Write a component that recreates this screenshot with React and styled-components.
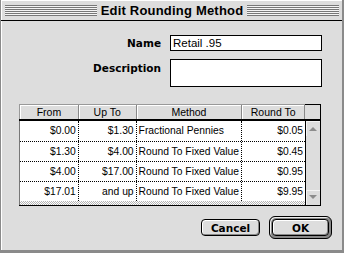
import styled, { createGlobalStyle } from "styled-components";

const GlobalStyle = createGlobalStyle`
    html, body {
        margin: 0;
        padding: 0;
        background: #dddddd;
    }
    * {
        box-sizing: border-box;
    }
`;

const Window = styled.div`
    width: 344px;
    height: 253px;
    background: #dddddd;
    border-left: 1px solid #8a8a8a;
    border-right: 2px solid #8a8a8a;
    border-bottom: 3px solid #8a8a8a;
    display: flex;
    flex-direction: column;
    font-family: "Liberation Sans", Arial, sans-serif;
    color: #000;
    overflow: hidden;
`;

const TitleBar = styled.div`
    height: 21px;
    flex-shrink: 0;
    display: flex;
    align-items: center;
    gap: 4px;
    padding: 0 3px 0 4px;
    border-bottom: 1px solid #000;
    box-shadow: inset 1px 1px 0 #fff;
`;

const Stripes = styled.div`
    flex: 1;
    height: 11px;
    background: repeating-linear-gradient(
        to bottom,
        #777 0 1px,
        #f4f4f4 1px 2px
    );
`;

const Title = styled.div`
    font-family: "Liberation Sans", Arial, sans-serif;
    font-weight: bold;
    font-size: 13px;
    letter-spacing: 0.2px;
    white-space: nowrap;
`;

const Body = styled.div`
    flex: 1;
    display: flex;
    flex-direction: column;
    box-shadow: inset 1px 0 0 #fff;
`;

const Form = styled.div`
    display: grid;
    grid-template-columns: 160px 152px;
    column-gap: 9px;
    row-gap: 8px;
    margin-top: 14px;
`;

const Label = styled.div`
    text-align: right;
    font-family: "DejaVu Sans", sans-serif;
    font-weight: bold;
    font-size: 10.5px;
    padding-top: ${(p) => (p.$top ? "3px" : "0")};
    align-self: ${(p) => (p.$top ? "start" : "center")};
`;

const Field = styled.div`
    height: ${(p) => p.$height}px;
    background: #fff;
    border: 1px solid #000;
    font-size: 11.5px;
    padding: 1px 2px;
    line-height: 13px;
`;

const List = styled.div`
    margin: 17px 0 0 18px;
    width: 302px;
    display: flex;
    flex-direction: column;
`;

const HeaderRow = styled.div`
    display: flex;
    height: 15px;
    border-top: 1px solid #999;
    border-left: 1px solid #999;
`;

const HeadCell = styled.div`
    width: ${(p) => p.$w}px;
    font-size: 10.5px;
    line-height: 14px;
    text-align: center;
    background: #dddddd;
    border-right: 1px solid #888;
    box-shadow: inset 1px 1px 0 #fff;
`;

const HeadCorner = styled.div`
    width: 16px;
    margin-top: -1px;
    border-top: 1px solid #000;
    border-right: 1px solid #000;
`;

const ListBody = styled.div`
    display: flex;
    border-top: 2px solid #000;
    border-bottom: 1px solid #000;
`;

const Rows = styled.div`
    width: 286px;
    display: flex;
    flex-direction: column;
    border-left: 1px solid #777;
    background-color: #fff;
    background-image: conic-gradient(
        #b5b5b5 25%,
        #fff 0 50%,
        #b5b5b5 0 75%,
        #fff 0
    );
    background-size: 2px 2px;
    padding-bottom: 4px;
`;

const Row = styled.div`
    display: flex;
    height: 20px;
    background: #fff;
    border-top: ${(p) => (p.$first ? "none" : "1px dotted #000")};
`;

const Cell = styled.div`
    width: ${(p) => p.$w}px;
    font-size: 10.3px;
    line-height: 19px;
    text-align: ${(p) => (p.$left ? "left" : "right")};
    padding: 0 2px;
    white-space: nowrap;
    overflow: hidden;
    border-right: ${(p) => (p.$last ? "none" : "1px dotted #000")};
`;

const Scrollbar = styled.div`
    width: 16px;
    display: flex;
    flex-direction: column;
    justify-content: space-between;
    background: #dddddd;
    border-left: 1px solid #000;
    border-right: 1px solid #000;
`;

const Arrow = styled.div`
    height: 15px;
    display: flex;
    align-items: center;
    justify-content: center;
    box-shadow: inset 1px 1px 0 #f4f4f4;
`;

const Buttons = styled.div`
    display: flex;
    justify-content: flex-end;
    align-items: center;
    gap: 9px;
    margin-top: 10px;
    padding-right: 10px;
`;

const Button = styled.div`
    width: ${(p) => p.$w}px;
    height: 17px;
    border: 1px solid #000;
    border-radius: 4px;
    background: #dddddd;
    box-shadow: inset 1px 1px 0 #fff, inset -1px -1px 0 #888;
    font-family: "DejaVu Sans", sans-serif;
    font-weight: bold;
    font-size: 10.5px;
    display: flex;
    align-items: center;
    justify-content: center;
`;

const DefaultRing = styled.div`
    padding: 2px;
    border: 1px solid #000;
    border-radius: 6px;
    background: #888;
    box-shadow: inset 1px 1px 0 #eee;
`;

const columns = [59, 58, 106, 63];

const rows = [
    ["$0.00", "$1.30", "Fractional Pennies", "$0.05"],
    ["$1.30", "$4.00", "Round To Fixed Value", "$0.45"],
    ["$4.00", "$17.00", "Round To Fixed Value", "$0.95"],
    ["$17.01", "and up", "Round To Fixed Value", "$9.95"],
];

function App() {
    return (
        <Window>
            <GlobalStyle />
            <TitleBar>
                <Stripes />
                <Title>Edit Rounding Method</Title>
                <Stripes />
            </TitleBar>
            <Body>
                <Form>
                    <Label>Name</Label>
                    <Field $height={16}>Retail .95</Field>
                    <Label $top>Description</Label>
                    <Field $height={28} />
                </Form>
                <List>
                    <HeaderRow>
                        <HeadCell $w={columns[0]}>From</HeadCell>
                        <HeadCell $w={columns[1]}>Up To</HeadCell>
                        <HeadCell $w={columns[2]}>Method</HeadCell>
                        <HeadCell $w={columns[3]}>Round To</HeadCell>
                        <HeadCorner />
                    </HeaderRow>
                    <ListBody>
                        <Rows>
                            {rows.map((r, i) => (
                                <Row key={i} $first={i === 0}>
                                    <Cell $w={columns[0]}>{r[0]}</Cell>
                                    <Cell $w={columns[1]}>{r[1]}</Cell>
                                    <Cell $w={columns[2]} $left>
                                        {r[2]}
                                    </Cell>
                                    <Cell $w={columns[3]} $last>
                                        {r[3]}
                                    </Cell>
                                </Row>
                            ))}
                        </Rows>
                        <Scrollbar>
                            <Arrow>
                                <svg width="8" height="5" viewBox="0 0 8 5">
                                    <path d="M0 5 L4 1 L8 5 Z" fill="#8c8c8c" />
                                </svg>
                            </Arrow>
                            <Arrow>
                                <svg width="8" height="5" viewBox="0 0 8 5">
                                    <path d="M0 0 L4 4 L8 0 Z" fill="#8c8c8c" />
                                </svg>
                            </Arrow>
                        </Scrollbar>
                    </ListBody>
                </List>
                <Buttons>
                    <Button $w={59}>Cancel</Button>
                    <DefaultRing>
                        <Button $w={57}>OK</Button>
                    </DefaultRing>
                </Buttons>
            </Body>
        </Window>
    );
}

export default App;
